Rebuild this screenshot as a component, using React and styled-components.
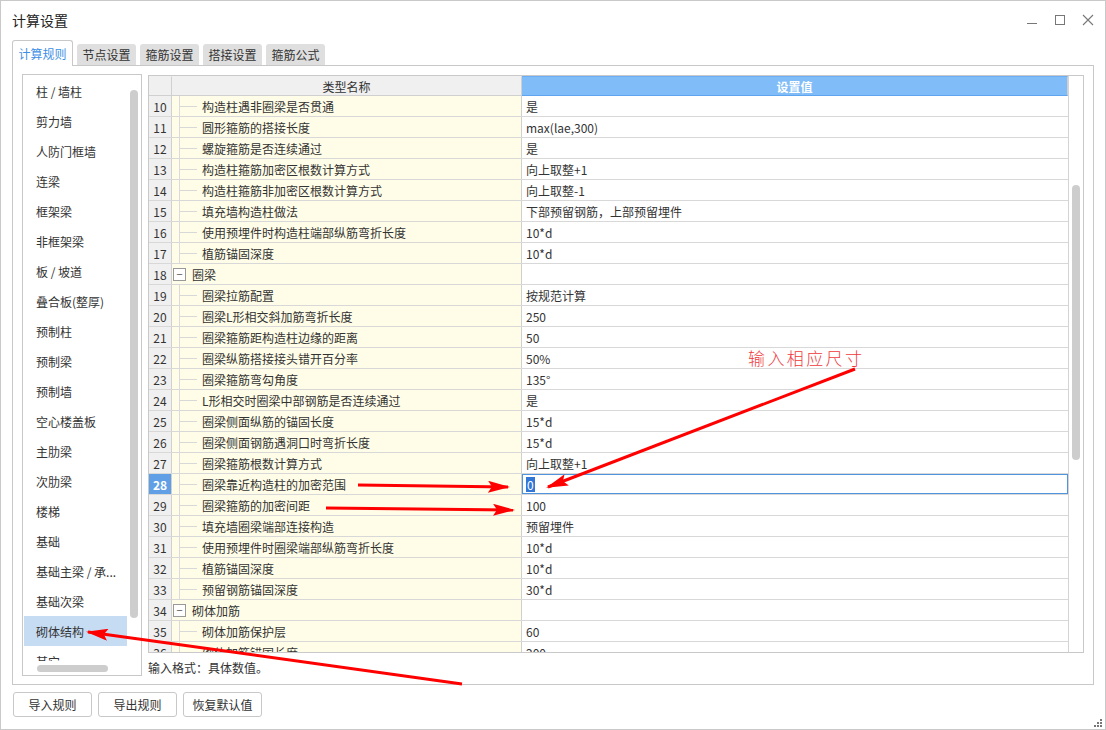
import React from "react";
import styled, { createGlobalStyle } from "styled-components";

const GlobalStyle = createGlobalStyle`
  html, body {
    margin: 0;
    padding: 0;
    background: #fff;
  }
  body {
    font-family: "Noto Sans CJK SC", "Microsoft YaHei", sans-serif;
    font-size: 12px;
    color: #333;
  }
  * {
    box-sizing: border-box;
  }
`;

const Window = styled.div`
  position: relative;
  width: 1106px;
  height: 730px;
  border: 1px solid #c9c9c9;
  display: flex;
  flex-direction: column;
  background: #fff;
  overflow: hidden;
`;

const TitleBar = styled.div`
  height: 38px;
  display: flex;
  align-items: center;
  padding: 0 3px 0 11px;
`;

const Title = styled.div`
  font-size: 14px;
  color: #222;
`;

const Controls = styled.div`
  margin-left: auto;
  display: flex;
`;

const ControlButton = styled.div`
  width: 28px;
  height: 28px;
  display: flex;
  align-items: center;
  justify-content: center;
`;

const Tabs = styled.div`
  margin: 1px 0 0 11px;
  height: 25px;
  display: flex;
  align-items: flex-end;
  gap: 4px;
`;

const Tab = styled.div`
  position: relative;
  z-index: 1;
  width: ${(p) => (p.$active ? "61px" : "59px")};
  height: ${(p) => (p.$active ? "26px" : "21px")};
  margin-bottom: ${(p) => (p.$active ? "-1px" : "0")};
  display: flex;
  align-items: center;
  justify-content: center;
  font-size: 12px;
  border-radius: 3px 3px 0 0;
  color: ${(p) => (p.$active ? "#3d8fe6" : "#333")};
  background: ${(p) => (p.$active ? "#fff" : "#dfdfdf")};
  border: ${(p) => (p.$active ? "1px solid #c8c8c8" : "none")};
  border-bottom: none;
`;

const Panel = styled.div`
  margin: 0 11px 0 11px;
  height: 620px;
  border: 1px solid #c8c8c8;
  display: flex;
  gap: 6px;
  padding: 8px 9px;
`;

const List = styled.div`
  width: 120px;
  border: 1px solid #c8c8c8;
  display: flex;
  flex-direction: column;
`;

const ListBody = styled.div`
  flex: 1;
  display: flex;
  overflow: hidden;
`;

const ListItems = styled.div`
  width: 104px;
  padding: 1px 0 0 1px;
`;

const ListItem = styled.div`
  height: 30px;
  padding-left: 12px;
  display: flex;
  align-items: center;
  white-space: nowrap;
  background: ${(p) => (p.$selected ? "#c6dcf3" : "transparent")};
`;

const VScroll = styled.div`
  flex: 1;
  padding: ${(p) => p.$top}px 0 0 ${(p) => p.$left}px;
`;

const VThumb = styled.div`
  width: 8px;
  height: ${(p) => p.$height}px;
  border-radius: 4px;
  background: #cdcdcd;
`;

const HScroll = styled.div`
  height: 14px;
  padding: 4px 0 0 14px;
`;

const HThumb = styled.div`
  width: 71px;
  height: 7px;
  border-radius: 4px;
  background: #cdcdcd;
`;

const RightArea = styled.div`
  flex: 1;
  display: flex;
  flex-direction: column;
`;

const Grid = styled.div`
  margin-top: 1px;
  height: 578px;
  border: 1px solid #c9c9c9;
  display: flex;
`;

const GridMain = styled.div`
  flex: 1;
  display: flex;
  flex-direction: column;
  overflow: hidden;
`;

const HeaderRow = styled.div`
  display: grid;
  grid-template-columns: 23px 350px 1fr;
  height: 20px;
  flex-shrink: 0;
`;

const HeaderCell = styled.div`
  display: flex;
  align-items: center;
  justify-content: center;
  background: ${(p) => (p.$blue ? "#80bcf8" : "#f0f0f0")};
  color: ${(p) => (p.$blue ? "#fff" : "#333")};
  font-weight: ${(p) => (p.$blue ? "bold" : "normal")};
  border-right: 1px solid #d0d0d0;
  border-bottom: 1px solid ${(p) => (p.$blue ? "#5ea4ee" : "#d0d0d0")};
  border-top: 1px solid ${(p) => (p.$blue ? "#6caef3" : "#f0f0f0")};
`;

const Row = styled.div`
  display: grid;
  grid-template-columns: 23px 350px 1fr;
  height: 21px;
  flex-shrink: 0;
  border-bottom: 1px solid #d8d8d8;
`;

const NumCell = styled.div`
  display: flex;
  align-items: center;
  justify-content: center;
  border-right: 1px solid #d0d0d0;
  background: ${(p) => (p.$selected ? "#609fe6" : "#f0f0f0")};
  color: ${(p) => (p.$selected ? "#fff" : "#333")};
  font-weight: ${(p) => (p.$selected ? "bold" : "normal")};
`;

const NameCell = styled.div`
  display: flex;
  align-items: center;
  background: #fffde7;
  border-right: 1px solid #d0d0d0;
  white-space: nowrap;
`;

const TreeGuide = styled.span`
  flex-shrink: 0;
  margin-left: 7px;
  width: 23px;
  height: 21px;
  margin-bottom: -1px;
  border-left: 1px solid #dadada;
  background: linear-gradient(#d8d8d8, #d8d8d8) no-repeat 0 50% / 17px 1px;
`;

const Toggle = styled.span`
  flex-shrink: 0;
  margin-left: 1px;
  width: 13px;
  height: 13px;
  border: 1px solid #999;
  display: flex;
  align-items: center;
  justify-content: center;
  font-size: 11px;
  line-height: 1;
  color: #555;
  background: #fff;
`;

const GroupName = styled.span`
  margin-left: 6px;
`;

const ValueCell = styled.div`
  display: flex;
  align-items: center;
  padding-left: 4px;
  white-space: nowrap;
  box-shadow: ${(p) => (p.$selected ? "inset 0 0 0 1px #4f94dc" : "none")};
`;

const Selection = styled.span`
  background: #3277d6;
  color: #fff;
  padding: 0 1px;
  line-height: 15px;
`;

const Track = styled.div`
  width: 15px;
  border-left: 1px solid #d4d4d4;
  padding: 109px 0 0 3px;
`;

const Status = styled.div`
  padding-top: 6px;
  line-height: 18px;
`;

const Footer = styled.div`
  flex: 1;
  display: flex;
  align-items: flex-start;
  gap: 6px;
  padding: 7px 3px 2px 12px;
`;

const Button = styled.button`
  width: 79px;
  height: 25px;
  border: 1px solid #c8c8c8;
  border-radius: 3px;
  background: #fff;
  font-family: inherit;
  font-size: 12px;
  color: #333;
  padding: 0;
`;

const Grip = styled.div`
  margin-left: auto;
  align-self: flex-end;
  width: 8px;
  height: 8px;
  display: flex;
`;

const Overlay = styled.div`
  position: absolute;
  left: -1px;
  top: -1px;
  width: 1106px;
  height: 730px;
  pointer-events: none;
`;

const Note = styled.div`
  position: absolute;
  left: 748px;
  top: 348px;
  font-size: 17px;
  line-height: 20px;
  letter-spacing: 2.4px;
  color: #f0383c;
  font-weight: 300;
`;

const tabs = ["计算规则", "节点设置", "箍筋设置", "搭接设置", "箍筋公式"];

const categories = [
  "柱 / 墙柱",
  "剪力墙",
  "人防门框墙",
  "连梁",
  "框架梁",
  "非框架梁",
  "板 / 坡道",
  "叠合板(整厚)",
  "预制柱",
  "预制梁",
  "预制墙",
  "空心楼盖板",
  "主肋梁",
  "次肋梁",
  "楼梯",
  "基础",
  "基础主梁 / 承...",
  "基础次梁",
  "砌体结构",
  "其它",
];

const rows = [
  { n: 10, name: "构造柱遇非圈梁是否贯通", value: "是" },
  { n: 11, name: "圆形箍筋的搭接长度", value: "max(lae,300)" },
  { n: 12, name: "螺旋箍筋是否连续通过", value: "是" },
  { n: 13, name: "构造柱箍筋加密区根数计算方式", value: "向上取整+1" },
  { n: 14, name: "构造柱箍筋非加密区根数计算方式", value: "向上取整-1" },
  { n: 15, name: "填充墙构造柱做法", value: "下部预留钢筋，上部预留埋件" },
  { n: 16, name: "使用预埋件时构造柱端部纵筋弯折长度", value: "10*d" },
  { n: 17, name: "植筋锚固深度", value: "10*d" },
  { n: 18, name: "圈梁", group: true },
  { n: 19, name: "圈梁拉筋配置", value: "按规范计算" },
  { n: 20, name: "圈梁L形相交斜加筋弯折长度", value: "250" },
  { n: 21, name: "圈梁箍筋距构造柱边缘的距离", value: "50" },
  { n: 22, name: "圈梁纵筋搭接接头错开百分率", value: "50%" },
  { n: 23, name: "圈梁箍筋弯勾角度", value: "135°" },
  { n: 24, name: "L形相交时圈梁中部钢筋是否连续通过", value: "是" },
  { n: 25, name: "圈梁侧面纵筋的锚固长度", value: "15*d" },
  { n: 26, name: "圈梁侧面钢筋遇洞口时弯折长度", value: "15*d" },
  { n: 27, name: "圈梁箍筋根数计算方式", value: "向上取整+1" },
  { n: 28, name: "圈梁靠近构造柱的加密范围", value: "0", selected: true },
  { n: 29, name: "圈梁箍筋的加密间距", value: "100" },
  { n: 30, name: "填充墙圈梁端部连接构造", value: "预留埋件" },
  { n: 31, name: "使用预埋件时圈梁端部纵筋弯折长度", value: "10*d" },
  { n: 32, name: "植筋锚固深度", value: "10*d" },
  { n: 33, name: "预留钢筋锚固深度", value: "30*d" },
  { n: 34, name: "砌体加筋", group: true },
  { n: 35, name: "砌体加筋保护层", value: "60" },
  { n: 36, name: "砌体加筋锚固长度", value: "200" },
];

const arrows = [
  [855, 369, 548, 487],
  [358, 485, 508, 487],
  [326, 508, 513, 510],
  [462, 684, 88, 632],
];

const App = () => {
  return (
    <>
      <GlobalStyle />
      <Window>
        <TitleBar>
          <Title>计算设置</Title>
          <Controls>
            <ControlButton>
              <svg width="12" height="12" viewBox="0 0 12 12">
                <line x1="1" y1="9.5" x2="11" y2="9.5" stroke="#777" />
              </svg>
            </ControlButton>
            <ControlButton>
              <svg width="12" height="12" viewBox="0 0 12 12">
                <rect x="1.5" y="1.5" width="9" height="9" fill="none" stroke="#777" />
              </svg>
            </ControlButton>
            <ControlButton>
              <svg width="12" height="12" viewBox="0 0 12 12">
                <path d="M1 1L11 11M11 1L1 11" stroke="#777" strokeWidth="1.1" />
              </svg>
            </ControlButton>
          </Controls>
        </TitleBar>

        <Tabs>
          {tabs.map((t, i) => (
            <Tab key={t} $active={i === 0}>
              {t}
            </Tab>
          ))}
        </Tabs>

        <Panel>
          <List>
            <ListBody>
              <ListItems>
                {categories.map((c) => (
                  <ListItem key={c} $selected={c === "砌体结构"}>
                    {c}
                  </ListItem>
                ))}
              </ListItems>
              <VScroll $top={15} $left={3}>
                <VThumb $height={528} />
              </VScroll>
            </ListBody>
            <HScroll>
              <HThumb />
            </HScroll>
          </List>

          <RightArea>
            <Grid>
              <GridMain>
                <HeaderRow>
                  <HeaderCell />
                  <HeaderCell>类型名称</HeaderCell>
                  <HeaderCell $blue>设置值</HeaderCell>
                </HeaderRow>
                {rows.map((r) => (
                  <Row key={r.n}>
                    <NumCell $selected={r.selected}>{r.n}</NumCell>
                    <NameCell>
                      {r.group ? (
                        <>
                          <Toggle>−</Toggle>
                          <GroupName>{r.name}</GroupName>
                        </>
                      ) : (
                        <>
                          <TreeGuide />
                          {r.name}
                        </>
                      )}
                    </NameCell>
                    <ValueCell $selected={r.selected}>
                      {r.selected ? <Selection>{r.value}</Selection> : r.value}
                    </ValueCell>
                  </Row>
                ))}
              </GridMain>
              <Track>
                <VThumb $height={275} />
              </Track>
            </Grid>
            <Status>输入格式：具体数值。</Status>
          </RightArea>
        </Panel>

        <Footer>
          <Button>导入规则</Button>
          <Button>导出规则</Button>
          <Button>恢复默认值</Button>
          <Grip>
            <svg width="8" height="8" viewBox="0 0 8 8">
              <g fill="#777">
                <rect x="6" y="0" width="2" height="2" />
                <rect x="3" y="3" width="2" height="2" />
                <rect x="6" y="3" width="2" height="2" />
                <rect x="0" y="6" width="2" height="2" />
                <rect x="3" y="6" width="2" height="2" />
                <rect x="6" y="6" width="2" height="2" />
              </g>
            </svg>
          </Grip>
        </Footer>

        <Overlay>
          <svg width="1106" height="730" viewBox="0 0 1106 730">
            <defs>
              <marker
                id="head"
                markerUnits="userSpaceOnUse"
                markerWidth="22"
                markerHeight="12"
                refX="20"
                refY="6"
                orient="auto"
              >
                <path d="M0 0L22 6L0 12L4 6Z" fill="#f00" />
              </marker>
            </defs>
            {arrows.map(([x1, y1, x2, y2], i) => (
              <line
                key={i}
                x1={x1}
                y1={y1}
                x2={x2}
                y2={y2}
                stroke="#f00"
                strokeWidth="3"
                markerEnd="url(#head)"
              />
            ))}
          </svg>
          <Note>输入相应尺寸</Note>
        </Overlay>
      </Window>
    </>
  );
};

export default App;
